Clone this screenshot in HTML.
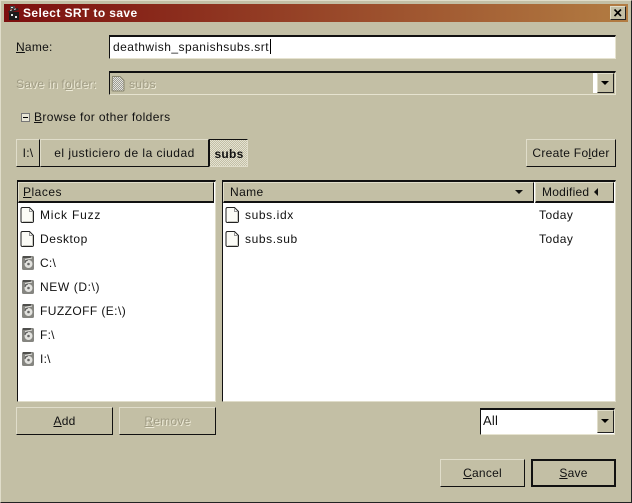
<!DOCTYPE html>
<html><head><meta charset="utf-8"><style>
html,body{margin:0;padding:0;width:632px;height:503px;overflow:hidden;background:#c3bfa5}
body{position:relative;font-family:"Liberation Sans",sans-serif;font-size:12px;color:#111}
.a{position:absolute;box-sizing:border-box}
.t{position:absolute;white-space:nowrap;line-height:14px;letter-spacing:.25px}
.btn{position:absolute;box-sizing:border-box;background:#c3bfa5;border:1px solid;border-color:#e0ddca #111 #111 #e0ddca;text-align:center;line-height:24px;letter-spacing:.25px;white-space:nowrap}
.dis{color:#a09c84;text-shadow:1px 1px 0 #eeebd8}
u{text-underline-offset:1px}
.sunk{position:absolute;box-sizing:border-box;border:1px solid;border-color:#111 #e6e3d0 #e6e3d0 #111}
</style></head><body>
<div class="a" style="left:0;top:0;width:632px;height:503px;border:1px solid;border-color:#e0ddca #222 #222 #e0ddca"></div>
<div class="a" style="left:4px;top:4px;width:624px;height:18px;background:linear-gradient(90deg,#7c0e0e,#b27c42)"></div>
<svg class="a" style="left:6px;top:5px" width="16" height="16" viewBox="0 0 16 16"><path d="M3 7h10v8H3Z" fill="#1c1c1c"/><path d="M2 6L12 3l.5 2L3 8Z" fill="#2a2a2a"/><path d="M4 1h5v3H4Z" fill="#444"/><path d="M5 2h2v1H5zM5 9h2v2H5zM9 11h2v2H9z" fill="#e4e4e4"/><path d="M4 5l2-.6v1L4 6zM8 4l2-.6v1L8 5z" fill="#ccc"/></svg>
<div class="t" style="left:23px;top:6px;color:#fff;font-weight:bold;letter-spacing:.4px;font-size:12px">Select SRT to save</div>
<div class="a" style="left:610px;top:6px;width:16px;height:14px;background:#c3bfa5;border:1px solid;border-color:#e0ddca #222 #222 #e0ddca"></div>
<svg class="a" style="left:610px;top:6px" width="16" height="14"><path d="M4.500 3.500L11 10M11 3.500L4.500 10" stroke="#000" stroke-width="1.600"/></svg>

<div class="t" style="left:16px;top:40px"><u>N</u>ame:</div>
<div class="sunk" style="left:109px;top:35px;width:507px;height:24px;background:#fff;border-top-width:2px;border-left-width:1px"></div>
<div class="t" style="left:113px;top:40px;letter-spacing:.48px">deathwish_spanishsubs.srt</div>
<div class="a" style="left:270px;top:39px;width:1px;height:15px;background:#000"></div>

<div class="t dis" style="left:16px;top:77px">Save in f<u>o</u>lder:</div>
<div class="sunk" style="left:109px;top:71px;width:507px;height:24px;border-top-width:2px"></div>
<svg class="a" style="left:111px;top:76px" width="14" height="16"><defs><pattern id="d" width="2" height="2" patternUnits="userSpaceOnUse"><rect width="2" height="2" fill="#e8e6d8"/><rect width="1" height="1" fill="#999"/><rect x="1" y="1" width="1" height="1" fill="#999"/></pattern></defs><path d="M1.500.5H9L13 4.500V14Q13 15 12 15H2Q1 15 1 14Z" fill="url(#d)" stroke="#8a8770"/></svg>
<div class="t dis" style="left:129px;top:77px;letter-spacing:.4px">subs</div>
<div class="a" style="left:593px;top:73px;width:4px;height:20px;background:#fff"></div>
<div class="a" style="left:597px;top:73px;width:17px;height:20px;background:#c3bfa5;border:1px solid;border-color:#e0ddca #222 #222 #e0ddca"></div>
<div class="a" style="left:601px;top:81px;width:0;height:0;border:4px solid transparent;border-top:4px solid #000;border-bottom:0"></div>

<div class="a" style="left:21px;top:113px;width:9px;height:9px;border:1px solid #777;background:#e8e6d6"></div>
<div class="a" style="left:23px;top:117px;width:5px;height:1px;background:#000"></div>
<div class="t" style="left:34px;top:110px;letter-spacing:.38px"><u>B</u>rowse for other folders</div>

<div class="btn" style="left:16px;top:139px;width:24px;height:28px;line-height:26px">I:\</div>
<div class="btn" style="left:40px;top:139px;width:169px;height:28px;line-height:26px;letter-spacing:.48px">el justiciero de la ciudad</div>
<div class="btn" style="left:209px;top:139px;width:39px;height:28px;line-height:28px;padding-left:1px;border-color:#111 #e0ddca #e0ddca #111;font-weight:bold;background:repeating-conic-gradient(#c3bfa5 0 25%,#e4e2d2 0 50%) 0 0/2px 2px">subs</div>
<div class="btn" style="left:526px;top:139px;width:90px;height:28px;line-height:26px;letter-spacing:.3px">Create Fo<u>l</u>der</div>

<div class="a" style="left:17px;top:180px;width:199px;height:222px;background:#fff;border:1px solid;border-color:#111 #e0ddca #e0ddca #111;border-top-width:2px"></div>
<div class="a" style="left:18px;top:182px;width:196px;height:21px;background:#c3bfa5;border-right:1px solid #111;border-bottom:2px solid #111;border-top:1px solid #e0ddca;border-left:1px solid #e0ddca"></div>
<div class="t" style="left:23px;top:185px;letter-spacing:.5px"><u>P</u>laces</div>

<div class="a" style="left:222px;top:180px;width:394px;height:222px;background:#fff;border:1px solid;border-color:#111 #e0ddca #e0ddca #111;border-top-width:2px"></div>
<div class="a" style="left:223px;top:182px;width:311px;height:21px;background:#c3bfa5;border-right:1px solid #111;border-bottom:2px solid #111;border-top:1px solid #e0ddca;border-left:1px solid #e0ddca"></div>
<div class="a" style="left:535px;top:182px;width:79px;height:21px;background:#c3bfa5;border-right:1px solid #111;border-bottom:2px solid #111;border-top:1px solid #e0ddca;border-left:1px solid #e0ddca"></div>
<div class="t" style="left:230px;top:185px;letter-spacing:.4px">Name</div>
<div class="t" style="left:542px;top:185px">Modified</div>
<div class="a" style="left:515px;top:190px;width:0;height:0;border:4px solid transparent;border-top:4px solid #111;border-bottom:0"></div>
<div class="a" style="left:594px;top:188px;width:0;height:0;border:4px solid transparent;border-right:4px solid #111;border-left:0"></div>

<svg width="0" height="0" style="position:absolute"><defs>
<g id="f"><path d="M2.500.5H9.500L13.500 4.500V14Q13.500 15.500 12 15.500H2.500Q1 15.500 1 14V2Q1 .5 2.500.5Z" fill="#fbfbf6" stroke="#222"/><path d="M9.500 1V4.500H13" fill="none" stroke="#999"/><path d="M12.500 5V14.500H3" fill="none" stroke="#c8c8c0"/></g>
<g id="h"><rect x="0" y="1" width="12" height="14" rx="1.500" fill="#858580"/><rect x="1" y="1" width="8" height="2" fill="#4f4f4c"/><circle cx="6.500" cy="9" r="4" fill="#e2e2de"/><path d="M3 8a4 4 0 0 1 3-3" fill="none" stroke="#555"/><circle cx="6.500" cy="9" r="1.300" fill="#666"/><path d="M3 4.500L10 3" stroke="#e4e4e0"/></g>
</defs></svg>
<svg class="a" style="left:20px;top:207px" width="16" height="17"><use href="#f"/></svg>
<div class="t" style="left:40px;top:208px;letter-spacing:.8px">Mick Fuzz</div>
<svg class="a" style="left:20px;top:231px" width="16" height="17"><use href="#f"/></svg>
<div class="t" style="left:40px;top:232px;letter-spacing:.55px">Desktop</div>
<svg class="a" style="left:22px;top:255px" width="14" height="16"><use href="#h"/></svg>
<div class="t" style="left:40px;top:256px">C:\</div>
<svg class="a" style="left:22px;top:279px" width="14" height="16"><use href="#h"/></svg>
<div class="t" style="left:40px;top:280px;letter-spacing:.6px">NEW (D:\)</div>
<svg class="a" style="left:22px;top:303px" width="14" height="16"><use href="#h"/></svg>
<div class="t" style="left:40px;top:304px;letter-spacing:.42px">FUZZOFF (E:\)</div>
<svg class="a" style="left:22px;top:327px" width="14" height="16"><use href="#h"/></svg>
<div class="t" style="left:40px;top:328px">F:\</div>
<svg class="a" style="left:22px;top:351px" width="14" height="16"><use href="#h"/></svg>
<div class="t" style="left:40px;top:352px">I:\</div>

<svg class="a" style="left:225px;top:207px" width="16" height="17"><use href="#f"/></svg>
<div class="t" style="left:245px;top:208px;letter-spacing:.6px">subs.idx</div>
<div class="t" style="left:539px;top:208px;letter-spacing:.45px">Today</div>
<svg class="a" style="left:225px;top:231px" width="16" height="17"><use href="#f"/></svg>
<div class="t" style="left:245px;top:232px;letter-spacing:.6px">subs.sub</div>
<div class="t" style="left:539px;top:232px;letter-spacing:.45px">Today</div>

<div class="btn" style="left:16px;top:407px;width:97px;height:28px;line-height:26px"><u>A</u>dd</div>
<div class="btn dis" style="left:119px;top:407px;width:97px;height:28px;line-height:26px"><u>R</u>emove</div>

<div class="sunk" style="left:480px;top:408px;width:135px;height:27px;background:#fff;border-top-width:2px;border-left-width:1px"></div>
<div class="t" style="left:483px;top:414px;font-size:13px">All</div>
<div class="a" style="left:597px;top:410px;width:17px;height:23px;background:#c3bfa5;border:1px solid;border-color:#e0ddca #222 #222 #e0ddca"></div>
<div class="a" style="left:601px;top:419px;width:0;height:0;border:4px solid transparent;border-top:4px solid #000;border-bottom:0"></div>

<div class="btn" style="left:440px;top:459px;width:85px;height:28px;line-height:27px"><u>C</u>ancel</div>
<div class="btn" style="left:531px;top:459px;width:85px;height:28px;line-height:25px;border:2px solid;border-color:#111"><u>S</u>ave</div>
</body></html>
